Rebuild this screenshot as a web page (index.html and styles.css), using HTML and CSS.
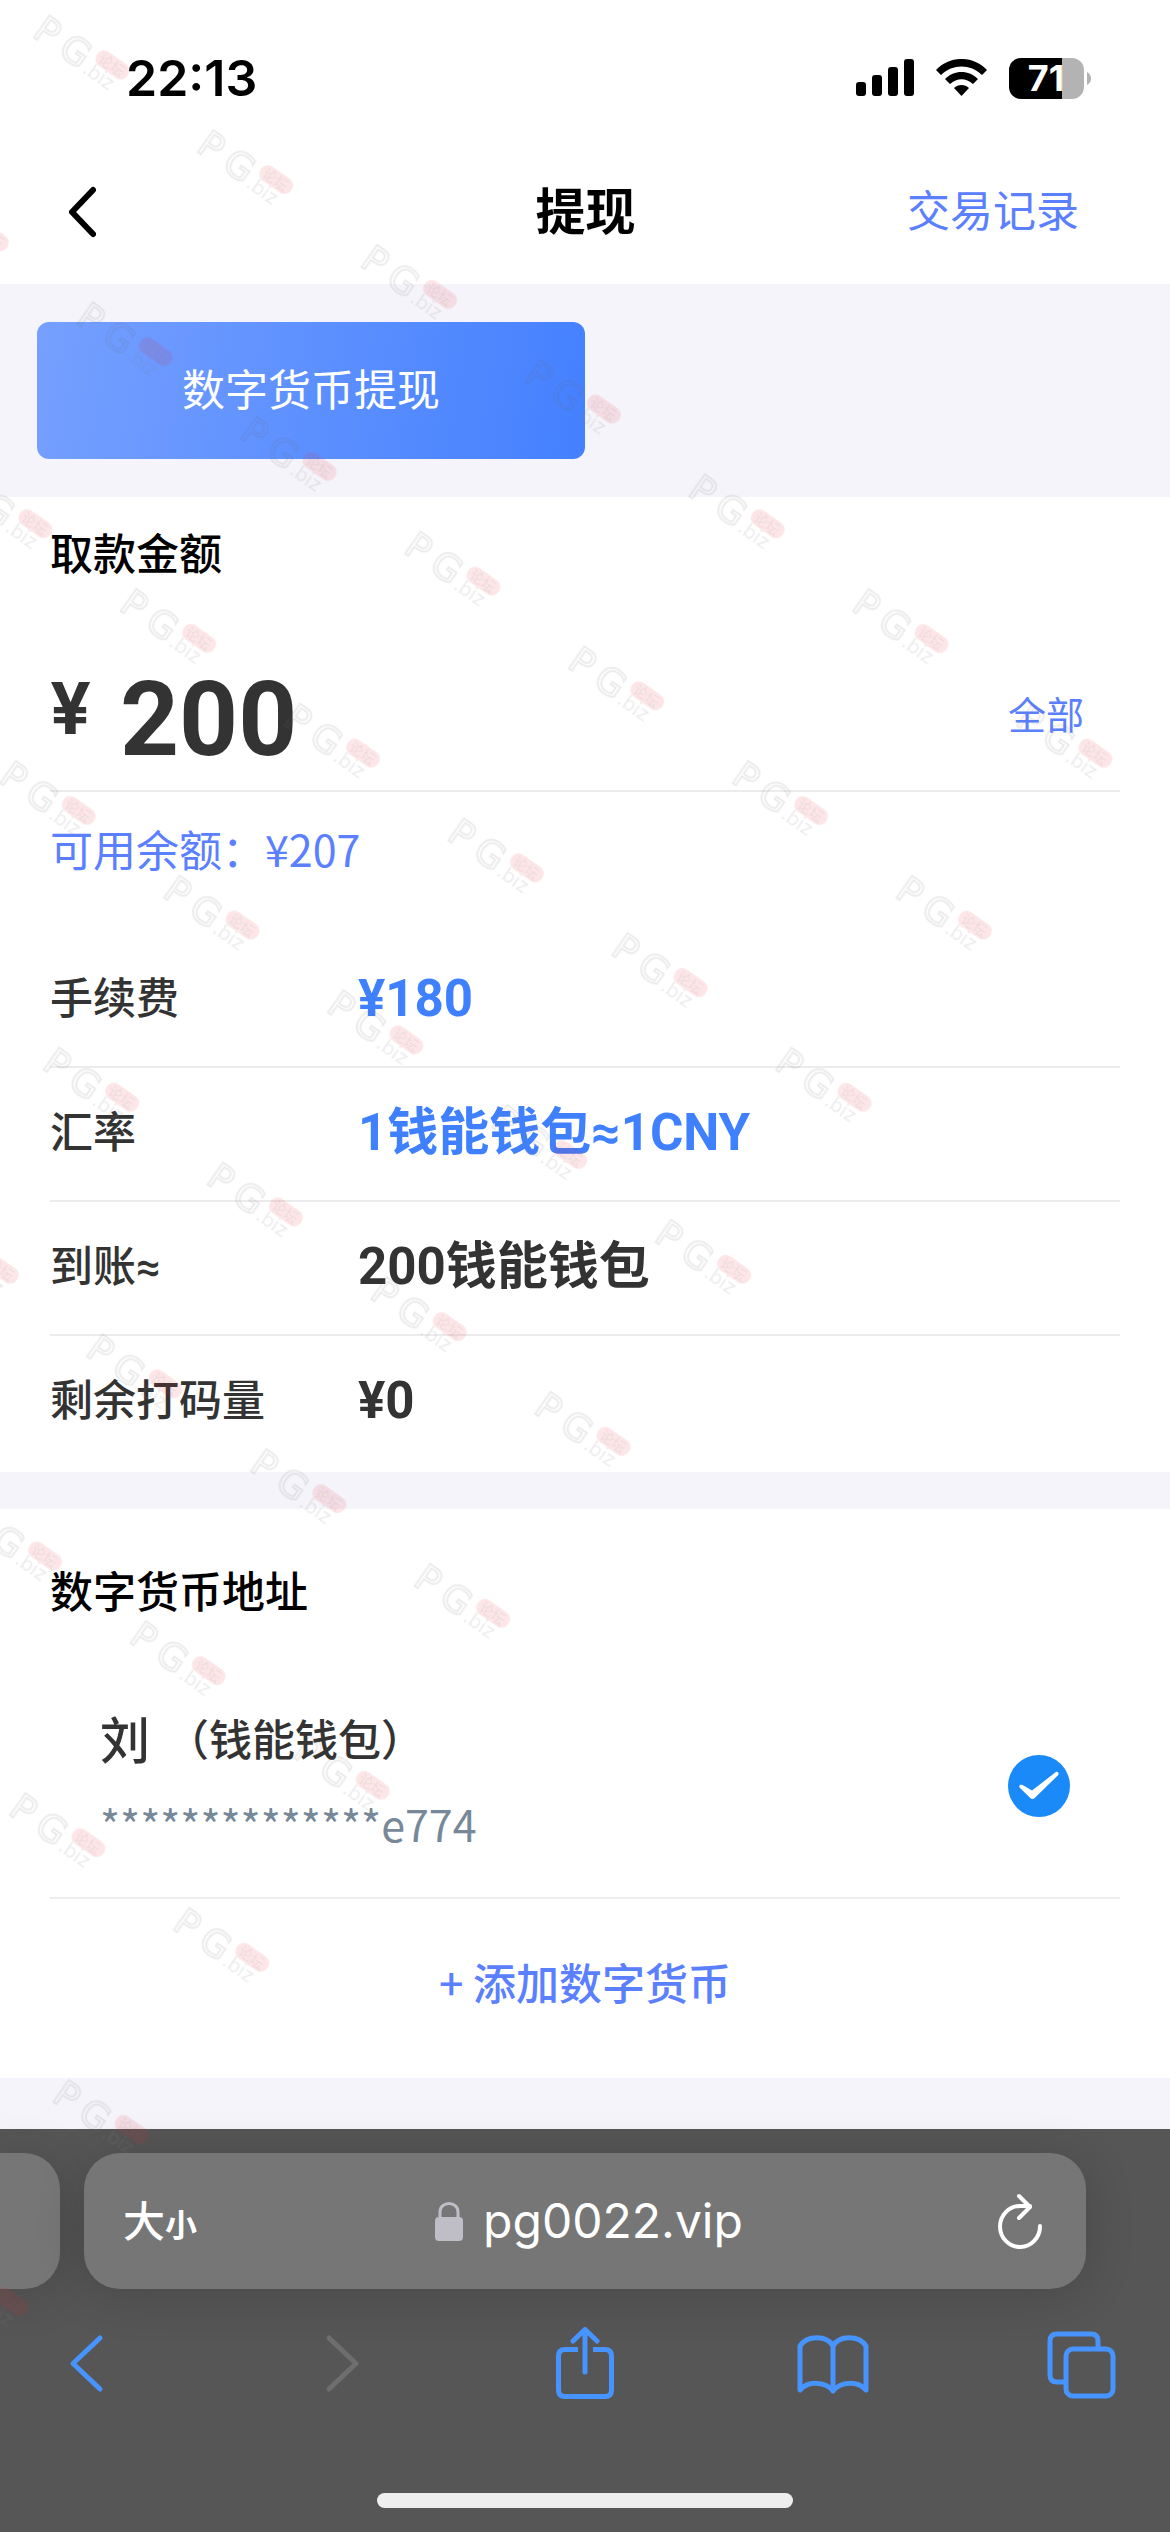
FILE: index.html
```html
<!DOCTYPE html>
<html lang="zh-CN">
<head>
<meta charset="utf-8">
<meta name="viewport" content="width=device-width, initial-scale=1">
<title>提现</title>
<link rel="stylesheet" href="styles.css">
</head>
<body>
<div class="screen">
  <div class="status">
    <span class="status-time">22:13</span>
    <div class="status-icons">
      <svg width="58" height="38" viewBox="0 0 58 38" aria-hidden="true">
        <rect x="0" y="23" width="10" height="14" rx="3"/>
        <rect x="16" y="16" width="10" height="21" rx="3"/>
        <rect x="32" y="8" width="10" height="29" rx="3"/>
        <rect x="48" y="0" width="10" height="37" rx="3"/>
      </svg>
      <svg width="51" height="38" viewBox="0 0 51 38" aria-hidden="true">
        <path d="M0 11C14-3.700 37-3.700 51 11L46 16C34 4.700 17 4.700 5 16Z"/>
        <path d="M9 20C18 10.500 33 10.500 42 20L37 25C30 18.500 21 18.500 14 25Z"/>
        <path d="M18 29C22 25 29 25 33 29L25.500 37Z"/>
      </svg>
      <div class="battery">
        <span class="battery-cell">71</span>
        <svg width="4" height="13" viewBox="0 0 4 13" aria-hidden="true"><path d="M0 0Q4 2 4 6.500T0 13Z" fill="#b3b3b3"/></svg>
      </div>
    </div>
  </div>

  <header class="nav">
    <button class="nav-back" type="button" aria-label="返回">
      <svg width="28" height="52" viewBox="0 0 28 52" aria-hidden="true"><path d="M25 4L4 26L25 48" fill="none" stroke="#000" stroke-width="6" stroke-linecap="round" stroke-linejoin="round"/></svg>
    </button>
    <h1 class="nav-title">提现</h1>
    <a class="nav-link" href="#records">交易记录</a>
  </header>

  <main class="page">
    <div class="methods">
      <button class="method" type="button">数字货币提现</button>
    </div>

    <section class="card card-amount">
      <h2 class="heading"><label for="amount">取款金额</label></h2>
      <div class="amount">
        <span class="amount-sign">¥</span>
        <input class="amount-input" id="amount" type="text" inputmode="decimal" value="200">
        <button class="amount-all" type="button">全部</button>
      </div>
      <p class="balance">可用余额：¥207</p>
      <dl class="details">
        <div class="detail"><dt>手续费</dt><dd class="accent">¥180</dd></div>
        <div class="detail"><dt>汇率</dt><dd class="accent">1钱能钱包≈1CNY</dd></div>
        <div class="detail"><dt>到账≈</dt><dd>200钱能钱包</dd></div>
        <div class="detail"><dt>剩余打码量</dt><dd>¥0</dd></div>
      </dl>
    </section>

    <section class="card card-address">
      <h2 class="heading">数字货币地址</h2>
      <label class="account">
        <span class="account-text">
          <span class="account-owner"><b>刘</b><span>（钱能钱包）</span></span>
          <span class="account-number">**************e774</span>
        </span>
        <span class="account-check">
          <input type="radio" name="account" checked>
          <svg width="62" height="62" viewBox="0 0 62 62" aria-hidden="true"><path d="M11.500 32.500C10.500 30.500 12.500 29 15 30.300L24 35.600L47.500 17.300C50 15.800 51.500 18.500 50 20.200L27 42.800Q24.500 45.200 22 42.800Z" fill="#fff"/></svg>
        </span>
      </label>
      <button class="add" type="button">+ 添加数字货币</button>
    </section>
  </main>

  <footer class="browser">
    <div class="tabs">
      <div class="tab-prev"></div>
      <div class="address">
        <button class="text-size" type="button">大<small>小</small></button>
        <button class="site" type="button">
          <svg width="28" height="40" viewBox="0 0 28 40" aria-hidden="true"><path d="M5 18V11C5-.500 23-.500 23 11V18" fill="none" stroke="#bfbdc6" stroke-width="3"/><rect x="0" y="16" width="28" height="24" rx="4" fill="#bfbdc6"/></svg>
          <span>pg0022.vip</span>
        </button>
        <button class="reload" type="button" aria-label="刷新">
          <svg width="46" height="56" viewBox="0 0 46 56" fill="none" stroke="#fff" stroke-width="4" stroke-linecap="round" stroke-linejoin="round" aria-hidden="true"><path d="M43 33A20 20.500 0 1 1 23 13H33M22 3L33 14L22 25"/></svg>
        </button>
      </div>
    </div>
    <nav class="tools">
      <button type="button" aria-label="后退"><svg width="72" height="72" viewBox="0 0 72 72"><path d="M50 11L23 36.500L50 62"/></svg></button>
      <button type="button" aria-label="前进" disabled><svg width="72" height="72" viewBox="0 0 72 72"><path d="M30 11L57 36.500L30 62"/></svg></button>
      <button type="button" aria-label="分享"><svg width="72" height="72" viewBox="0 0 72 72"><path d="M30 22.500H17Q10.500 22.500 10.500 29V63Q10.500 69.500 17 69.500H57Q63.500 69.500 63.500 63V29Q63.500 22.500 57 22.500H45" stroke-linecap="butt"/><path d="M37 45V3M25 14L37 2.500L49 14"/></svg></button>
      <button type="button" aria-label="书签"><svg width="72" height="72" viewBox="0 0 72 72"><path d="M3 19C10 8 30 8 36 19C42 8 62 8 69 19V63C61 54 44 54 36 64C28 54 11 54 3 63ZM36 19V64"/></svg></button>
      <button type="button" aria-label="标签页"><svg width="72" height="72" viewBox="0 0 72 72"><rect x="20" y="22" width="47" height="47" rx="7"/><path d="M52 21V14Q52 7 45 7H11Q4 7 4 14V48Q4 55 11 55H19" stroke-linecap="butt"/></svg></button>
    </nav>
    <div class="home-bar"></div>
  </footer>

  <svg class="watermark" aria-hidden="true">
    <defs>
      <pattern id="mark" width="200" height="210" patternUnits="userSpaceOnUse">
        <g transform="translate(10 10)">
          <text class="mark-logo" x="-3" y="26">P</text>
          <text class="mark-logo" x="28" y="26">G</text>
          <rect class="mark-pill" x="62" y="-5" width="37" height="17" rx="8"/>
          <text class="mark-forum" x="66" y="9">论坛</text>
          <text class="mark-biz" x="59" y="27">.biz</text>
        </g>
      </pattern>
    </defs>
    <g transform="translate(46 2) rotate(35)"><rect width="1400" height="2100" fill="url(#mark)"/></g>
  </svg>
</div>
</body>
</html>
```
FILE: styles.css
```css
* {
  box-sizing: border-box;
}

body,
h1,
h2,
p,
dl,
dd {
  margin: 0;
}

body {
  background: #f4f4fa;
  color: #333;
  font-family: "Noto Sans CJK SC", sans-serif;
  font-size: 43px;
  line-height: 64px;
}

button,
input {
  margin: 0;
  padding: 0;
  border: 0;
  background: none;
  color: inherit;
  font: inherit;
}

svg {
  display: block;
}

.screen {
  position: relative;
  display: flex;
  flex-direction: column;
  min-height: 100vh;
  overflow: hidden;
}

/* Status bar */
.status {
  display: flex;
  align-items: center;
  justify-content: space-between;
  height: 136px;
  padding: 20px 79px 0 126px;
  background: #fff;
  color: #000;
}

.status-time {
  font: 600 50px/64px Inter, sans-serif;
}

.status-icons,
.battery {
  display: flex;
  align-items: center;
}

.status-icons {
  gap: 22px;
}

.battery {
  gap: 3px;
}

.battery-cell {
  width: 75px;
  padding-right: 1px;
  border-radius: 12px;
  background: linear-gradient(90deg, #000 71%, #b3b3b3 71%);
  color: #fff;
  font: 700 36px/41px Inter, sans-serif;
  text-align: center;
}

/* Page header */
.nav {
  display: grid;
  grid-template-columns: 1fr auto 1fr;
  align-items: center;
  height: 148px;
  padding: 0 91px 4px 68px;
  background: #fff;
  color: #000;
}

.nav-back {
  justify-self: start;
  padding-top: 8px;
}

.nav-title {
  padding-left: 24px;
  font-size: 50px;
  font-weight: 700;
}

.nav-link {
  justify-self: end;
  color: #5b80ff;
  text-decoration: none;
}

/* Withdrawal page */
.page {
  flex: 1;
  padding-bottom: 51px;
}

.methods {
  display: grid;
  grid-template-columns: 1fr 1fr;
  padding: 38px 37px;
}

.method {
  height: 137px;
  padding-bottom: 8px;
  border-radius: 12px;
  background: linear-gradient(100deg, #76a0ff, #4480ff);
  color: #fff;
}

.card {
  padding: 0 50px;
  background: #fff;
}

.card-amount {
  padding-top: 22px;
  padding-bottom: 2px;
}

.card-address {
  margin-top: 37px;
  padding-top: 48px;
}

.heading {
  color: #000;
  font-size: 43px;
  font-weight: 500;
}

.amount {
  display: flex;
  align-items: flex-start;
  padding: 85px 36px 18px 0;
  border-bottom: 2px solid #ececee;
}

.amount-sign {
  width: 70px;
  font: 700 72px/80px Inter, sans-serif;
}

.amount-input {
  flex: 1;
  min-width: 0;
  height: 104px;
  font: 700 103px/104px Roboto, sans-serif;
}

.amount-all {
  color: #5b80ff;
  font-size: 38px;
  line-height: 90px;
}

.balance {
  padding-top: 24px;
  color: #5b80ff;
}

.details {
  margin-top: 54px;
}

.detail {
  display: grid;
  grid-template-columns: 308px 1fr;
  align-items: center;
  height: 134px;
  padding-bottom: 2px;
  border-bottom: 2px solid #ececee;
  font-family: Roboto, "Noto Sans CJK SC", sans-serif;
  font-weight: 500;
}

.detail:last-child {
  border-bottom-color: transparent;
}

.detail dd {
  font-size: 51px;
  font-weight: 700;
}

.detail .accent {
  color: #3f80ff;
}

/* Saved address */
.account {
  display: flex;
  align-items: center;
  justify-content: space-between;
  margin-top: 84px;
  padding: 0 50px 42px;
  border-bottom: 2px solid #ececee;
}

.account-text {
  display: flex;
  flex-direction: column;
  gap: 22px;
}

.account-owner {
  display: flex;
  align-items: center;
  gap: 16px;
  font-weight: 500;
}

.account-owner b {
  font-size: 50px;
  font-weight: 500;
}

.account-number {
  color: #789;
}

.account-check {
  display: grid;
  padding-top: 12px;
}

.account-check > * {
  grid-area: 1 / 1;
}

.account-check input {
  width: 62px;
  height: 62px;
  appearance: none;
  border-radius: 50%;
  background: #1a8af9;
}

.account-check svg {
  z-index: 1;
}

.add {
  display: block;
  width: 100%;
  padding: 50px 0 65px;
  color: #5b80ff;
  font-weight: 500;
}

/* Browser controls */
.browser {
  padding: 24px 0;
  background: #565656;
  color: #fff;
}

.tabs {
  display: flex;
  gap: 24px;
  padding-right: 84px;
}

.tab-prev,
.address {
  height: 136px;
  background: #767676;
  box-shadow: 0 6px 50px rgba(0, 0, 0, 0.16);
}

.tab-prev {
  flex: 0 0 60px;
  border-radius: 0 36px 36px 0;
}

.address {
  display: grid;
  grid-template-columns: 1fr auto 1fr;
  flex: 1;
  align-items: center;
  padding: 0 43px 0 39px;
  border-radius: 36px;
}

.text-size {
  justify-self: start;
  font-size: 42px;
  font-weight: 500;
}

.text-size small {
  font-size: 32px;
  font-weight: 700;
}

.site {
  display: flex;
  align-items: center;
  gap: 20px;
  padding-left: 12px;
  font: 400 48px/64px Inter, sans-serif;
}

.reload {
  justify-self: end;
}

.tools {
  display: flex;
  justify-content: space-between;
  padding: 38px 52px 0 50px;
}

.tools svg {
  fill: none;
  stroke: #4794ff;
  stroke-width: 5;
  stroke-linecap: round;
  stroke-linejoin: round;
}

.tools :disabled svg {
  stroke: #6e6e6e;
}

.home-bar {
  width: 416px;
  height: 15px;
  margin: 94px auto 0;
  border-radius: 8px;
  background: #eee;
}

/* Repeated forum mark laid over the whole screen */
.watermark {
  position: absolute;
  inset: 0;
  width: 100%;
  height: 100%;
  pointer-events: none;
}

.mark-logo {
  fill: none;
  stroke: rgba(100, 100, 110, 0.12);
  stroke-width: 2;
  font: 400 37px "DejaVu Sans", sans-serif;
}

.mark-pill {
  fill: rgba(235, 30, 40, 0.11);
}

.mark-forum {
  fill: rgba(90, 110, 110, 0.1);
  font: 400 14px "Noto Sans CJK SC", sans-serif;
}

.mark-biz {
  fill: rgba(130, 130, 130, 0.14);
  font: 400 20px Inter, sans-serif;
}
```
